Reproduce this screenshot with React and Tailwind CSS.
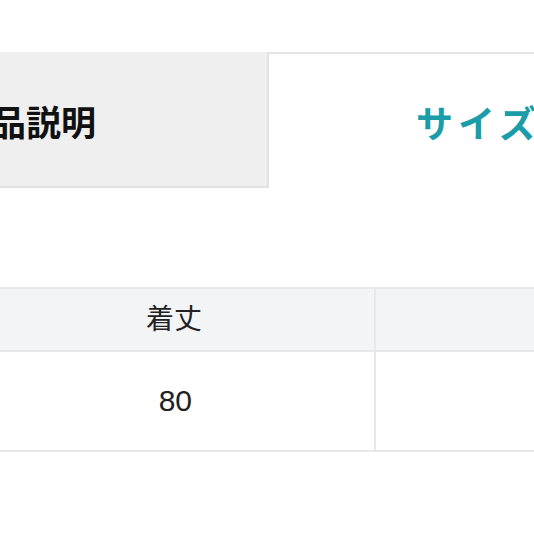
export default function App() {
  const font = { fontFamily: '"Liberation Sans", "Noto Sans CJK JP", sans-serif' };
  return (
    <div className="w-[534px] h-[534px] bg-white overflow-hidden" style={font}>
      <div className="pt-[52px] flex">
        <div className="w-[269px] h-[136px] shrink-0 bg-[#efefef] border-r-2 border-b-2 border-[#e2e2e2] flex items-center justify-end pr-[171px] pt-[8px] overflow-hidden">
          <span className="text-[35px] font-bold text-[#111] whitespace-nowrap leading-none">商品説明</span>
        </div>
        <div className="flex-1 h-[136px] border-t-2 border-[#e4e4e4] flex items-center pl-[147px] pt-[8px] overflow-hidden">
          <span className="text-[37px] font-bold text-[#1a9ca9] whitespace-nowrap leading-none tracking-[5px]">サイズ表</span>
        </div>
      </div>
      <div className="mt-[99px] flex border-t-2 border-[#e6e8ea]">
        <div className="w-[376px] shrink-0 flex flex-col border-r-2 border-[#e6e8ea]">
          <div className="h-[63px] bg-[#f2f4f6] border-b-2 border-[#e6e8ea] flex items-center justify-end pr-[172px]">
            <span className="text-[28px] text-[#222] leading-none">着丈</span>
          </div>
          <div className="h-[100px] border-b-2 border-[#e6e8ea] flex items-center justify-end pr-[182px]">
            <span className="text-[30px] text-[#222] leading-none">80</span>
          </div>
        </div>
        <div className="flex-1 flex flex-col">
          <div className="h-[63px] bg-[#f2f4f6] border-b-2 border-[#e6e8ea]"></div>
          <div className="h-[100px] border-b-2 border-[#e6e8ea]"></div>
        </div>
      </div>
    </div>
  );
}
